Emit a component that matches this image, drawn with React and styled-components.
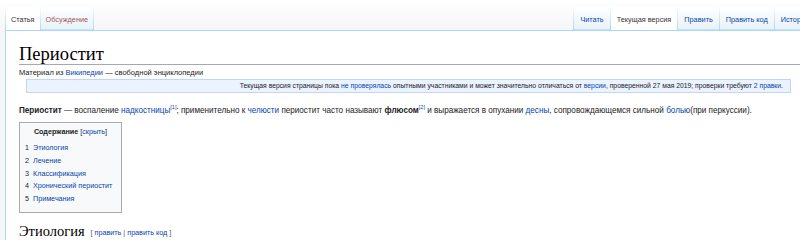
import styled, { createGlobalStyle } from "styled-components";

const GlobalStyle = createGlobalStyle`
  html, body {
    margin: 0;
    padding: 0;
    background: #f6f6f6;
    font-family: "Liberation Sans", Arial, sans-serif;
    color: #222;
  }
  a { color: #0645ad; text-decoration: none; }
`;

const leftTabs = [
  { label: "Статья", selected: true },
  { label: "Обсуждение", isNew: true },
];

const rightTabs = [
  { label: "Читать" },
  { label: "Текущая версия", selected: true },
  { label: "Править" },
  { label: "Править код" },
  { label: "История" },
];

const tocItems = ["Этиология", "Лечение", "Классификация", "Хронический периостит", "Примечания"];

const App = () => {
  return (
    <Page>
      <GlobalStyle />
      <Header>
        <TabGroup>
          {leftTabs.map((t) => (
            <Tab key={t.label} selected={t.selected}>
              <TabLink selected={t.selected} isNew={t.isNew}>{t.label}</TabLink>
            </Tab>
          ))}
        </TabGroup>
        <TabGroup>
          {rightTabs.map((t) => (
            <Tab key={t.label} selected={t.selected} wide>
              <TabLink selected={t.selected}>{t.label}</TabLink>
            </Tab>
          ))}
        </TabGroup>
      </Header>

      <Content>
        <Title>Периостит</Title>
        <SiteSub>Материал из <a>Википедии</a> — свободной энциклопедии</SiteSub>
        <Notice>
          Текущая версия страницы пока <a>не проверялась</a> опытными участниками и может значительно
          отличаться от <a>версии</a>, проверенной 27 мая 2019; проверки требуют <a>2 правки</a>.
        </Notice>

        <Paragraph>
          <b>Периостит</b> — воспаление <a>надкостницы</a><Ref>[1]</Ref>; применительно к <a>челюсти</a>{" "}
          периостит часто называют <b>флюсом</b><Ref>[2]</Ref> и выражается в опухании <a>десны</a>,
          сопровождающемся сильной <a>болью</a>(при перкуссии).
        </Paragraph>

        <Toc>
          <TocTitle>
            <b>Содержание</b> <TocToggle>[<a>скрыть</a>]</TocToggle>
          </TocTitle>
          <TocList>
            {tocItems.map((item, i) => (
              <TocItem key={item}>
                <TocNum>{i + 1}</TocNum>
                <a>{item}</a>
              </TocItem>
            ))}
          </TocList>
        </Toc>

        <SectionHeading>
          Этиология
          <EditLinks>
            <Bracket>[</Bracket> <a>править</a> <Bracket>|</Bracket> <a>править код</a> <Bracket>]</Bracket>
          </EditLinks>
        </SectionHeading>
      </Content>
    </Page>
  );
};

export default App;

const Page = styled.div`
  width: 800px;
  height: 240px;
  overflow: hidden;
  display: flex;
  flex-direction: column;
`;

const Header = styled.div`
  height: 30px;
  flex-shrink: 0;
  display: flex;
  justify-content: space-between;
  align-items: flex-end;
  padding-left: 5px;
  margin-right: -16px;
  background: linear-gradient(to bottom, #fff 0%, #f6f6f6 100%);
`;

const TabGroup = styled.div`
  display: flex;
  height: 23px;
  padding-left: 1px;
  background: linear-gradient(to bottom, rgba(167,215,249,0) 0, #a7d7f9 100%) no-repeat left bottom / 1px 100%;
`;

const Tab = styled.div`
  display: flex;
  align-items: center;
  padding: 2px ${({ wide }) => (wide ? "6px" : "5px")} 0;
  height: 100%;
  box-sizing: border-box;
  white-space: nowrap;
  background: ${({ selected }) =>
    selected
      ? "#fff"
      : "linear-gradient(to top, #a7d7f9 0, #e8f2f8 1px, #fff 100%)"};
  border-right: 1px solid;
  border-image: linear-gradient(to bottom, rgba(167,215,249,0) 0, #a7d7f9 100%) 1;
`;

const TabLink = styled.a`
  font-size: 7.3px;
  color: ${({ selected, isNew }) => (selected ? "#333" : isNew ? "#a55858" : "#0645ad")};
`;

const Content = styled.div`
  flex: 1;
  margin-left: 5px;
  background: #fff;
  border-left: 1px solid #a7d7f9;
  border-top: 1px solid #a7d7f9;
  padding: 14px 0 0 13px;
`;

const Title = styled.h1`
  margin: 0;
  font-family: "Liberation Serif", "Times New Roman", serif;
  font-weight: normal;
  font-size: 18.5px;
  line-height: 19px;
  color: #000;
  border-bottom: 1px solid #a2a9b1;
`;

const SiteSub = styled.div`
  font-size: 7.5px;
  line-height: 10px;
  margin-top: 3px;
  color: #222;
`;

const Notice = styled.div`
  margin: 1px 9px 0 7px;
  padding-right: 7px;
  background: #eaf3ff;
  border: 1px solid #c4d6ee;
  font-size: 6.8px;
  line-height: 12px;
  text-align: right;
  color: #222;
`;

const Paragraph = styled.p`
  margin: 11px 0 0;
  font-size: 8.15px;
  line-height: 14px;
  white-space: nowrap;
  color: #222;
`;

const Ref = styled.sup`
  font-size: 5.5px;
  line-height: 0;
  color: #0645ad;
`;

const Toc = styled.div`
  margin-top: 4px;
  width: 103px;
  box-sizing: border-box;
  border: 1px solid #aaa;
  background: #f8f9fa;
  padding: 2px 5px 6px;
  font-size: 7.2px;
`;

const TocTitle = styled.div`
  text-align: center;
  line-height: 14px;
  margin-bottom: 3px;
  color: #222;
`;

const TocToggle = styled.span`
  font-weight: normal;
`;

const TocList = styled.ul`
  list-style: none;
  margin: 0;
  padding: 0;
`;

const TocItem = styled.li`
  line-height: 12.8px;
  display: flex;
  gap: 4px;
`;

const TocNum = styled.span`
  color: #222;
`;

const SectionHeading = styled.h2`
  margin: 10px 0 0;
  font-family: "Liberation Serif", "Times New Roman", serif;
  font-weight: normal;
  font-size: 14.5px;
  line-height: 16px;
  color: #000;
  border-bottom: 1px solid #a2a9b1;
`;

const EditLinks = styled.span`
  font-family: "Liberation Sans", Arial, sans-serif;
  font-size: 7.2px;
  margin-left: 6px;
  vertical-align: 1px;
`;

const Bracket = styled.span`
  color: #54595d;
`;
